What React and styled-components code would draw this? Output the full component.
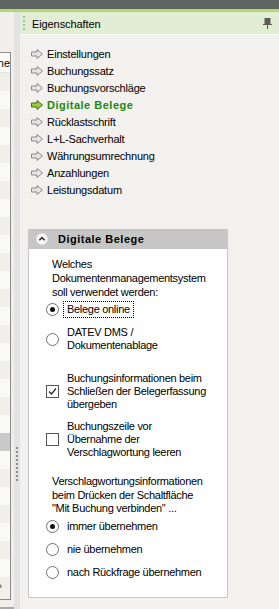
import React from "react";
import styled, { createGlobalStyle } from "styled-components";

const GlobalStyle = createGlobalStyle`
  html, body {
    margin: 0;
    padding: 0;
    background: #f2f1ed;
  }
  body {
    font-family: "Liberation Sans", Arial, sans-serif;
    font-size: 11px;
    color: #000;
  }
`;

const Frame = styled.div`
  width: 279px;
  height: 609px;
  display: flex;
  flex-direction: column;
  overflow: hidden;
  background: #f2f1ed;
`;

const TopBar = styled.div`
  height: 9px;
  background: #5e6562;
`;

const AccentLine = styled.div`
  height: 3px;
  background: #b4d96c;
`;

const Main = styled.div`
  flex: 1;
  display: flex;
  min-height: 0;
`;

/* left: clipped neighbour grid */
const LeftPane = styled.div`
  width: 14px;
  display: flex;
  flex-direction: column;
  padding-top: 40px;
  background: #f0efeb;
`;

const LeftTable = styled.div`
  width: 10px;
  height: 546px;
  border-top: 1px solid #8c8c8c;
  border-right: 1px solid #8c8c8c;
  border-bottom: 1px solid #8c8c8c;
  overflow: hidden;
  display: flex;
  flex-direction: column;
  position: relative;
`;

const TableHead = styled.div`
  height: 19px;
  flex: none;
  display: flex;
  align-items: center;
  justify-content: flex-end;
  background: #fbfbfa;
  border-bottom: 1px solid #e2e2de;
  white-space: nowrap;
  font-size: 11px;
`;

const TableRow = styled.div`
  height: 18px;
  flex: none;
  background: ${(p) => (p.$selected ? "#c9c9c9" : p.$odd ? "#f0efeb" : "#fafaf8")};
`;

const RowMarker = styled.span`
  position: absolute;
  left: -1px;
  bottom: 8px;
  color: #555;
  font-size: 9px;
  font-weight: bold;
  line-height: 9px;
`;

const BottomStrip = styled.div`
  margin-top: auto;
  height: 2px;
  background: #a9a9a9;
`;

const Splitter = styled.div`
  width: 6px;
  background: #e3e3e3;
  display: flex;
  flex-direction: column;
  align-items: center;
  padding-top: 435px;
  box-sizing: border-box;
`;

const GripDots = styled.div`
  width: 2px;
  height: 34px;
  margin-left: -1px;
  background: repeating-linear-gradient(
    to bottom,
    #8e8e8e 0,
    #8e8e8e 2px,
    transparent 2px,
    transparent 4px
  );
`;

/* right: property pane */
const PropertyPane = styled.div`
  flex: 1;
  display: flex;
  flex-direction: column;
  min-width: 0;
`;

const PaneHeader = styled.div`
  height: 22px;
  flex: none;
  display: flex;
  align-items: center;
  background: #e1eed3;
  border-bottom: 1px solid #f9f9f7;
  padding-left: 3px;
  padding-right: 7px;
`;

const HeaderGrip = styled.div`
  width: 2px;
  height: 14px;
  margin-right: 7px;
  background: repeating-linear-gradient(
    to bottom,
    #b3b8ae 0,
    #b3b8ae 2px,
    transparent 2px,
    transparent 4px
  );
`;

const PaneTitle = styled.span`
  flex: 1;
  padding-top: 2px;
  letter-spacing: -0.1px;
`;

const NavList = styled.ul`
  list-style: none;
  margin: 0;
  padding: 10px 0 0 11px;
`;

const NavItem = styled.li`
  height: 17px;
  display: flex;
  align-items: center;
  gap: 4px;
  white-space: nowrap;
  letter-spacing: ${(p) => (p.$active ? "0.5px" : "-0.2px")};
  font-weight: ${(p) => (p.$active ? "bold" : "normal")};
  color: ${(p) => (p.$active ? "#23870f" : "#000")};
`;

const GroupBox = styled.section`
  margin: 31px 0 0 8px;
  width: 200px;
  display: flex;
  flex-direction: column;
`;

const GroupHeader = styled.div`
  height: 20px;
  display: flex;
  align-items: center;
  gap: 10px;
  padding-left: 8px;
  background: #c6c6c6;
  font-weight: bold;
  letter-spacing: 0.5px;
`;

const GroupBody = styled.div`
  height: 349px;
  box-sizing: border-box;
  background: #fff;
  border: 1px solid #c8c8c8;
  border-top: none;
  padding: 8px 0 0 17px;
  display: flex;
  flex-direction: column;
  letter-spacing: -0.3px;
  white-space: nowrap;
`;

const Prompt = styled.div`
  margin: ${(p) => p.$top || 0}px 0 0 6px;
  line-height: ${(p) => p.$lh || 14}px;
`;

const Option = styled.label`
  display: flex;
  align-items: center;
  gap: 8px;
  margin-top: ${(p) => p.$top || 0}px;
  min-height: 17px;
  line-height: 13px;
`;

const OptionText = styled.span`
  padding: 1px 3px 1px 3px;
  margin: -2px 0 -2px -4px;
  border: 1px dotted ${(p) => (p.$focus ? "#000" : "transparent")};
`;

const Radio = styled.span`
  width: 13px;
  height: 13px;
  flex: none;
  box-sizing: border-box;
  border-radius: 50%;
  border: 1px solid #6f6f6f;
  background: #fff;
  display: flex;
  align-items: center;
  justify-content: center;
  &::after {
    content: "";
    width: 5px;
    height: 5px;
    border-radius: 50%;
    background: ${(p) => (p.$checked ? "#111" : "transparent")};
  }
`;

const Check = styled.span`
  width: 13px;
  height: 13px;
  flex: none;
  box-sizing: border-box;
  border: 1px solid #555;
  background: #fff;
  display: flex;
  align-items: center;
  justify-content: center;
`;

function NavArrow({ active }) {
  return (
    <svg width="12" height="10" viewBox="0 0 12 10">
      <path
        d="M0.5 3 H6 V0.5 L11.5 5 L6 9.5 V7 H0.5 Z"
        fill={active ? "#9acb3c" : "#e6e6e6"}
        stroke={active ? "#4d6a17" : "#8a8a8a"}
        strokeWidth="1"
        strokeLinejoin="miter"
      />
    </svg>
  );
}

function Pin() {
  return (
    <svg width="9" height="11" viewBox="0 0 9 11">
      <rect x="1.5" y="0" width="6" height="6" fill="#5b5b5b" />
      <rect x="0" y="6" width="9" height="1" fill="#5b5b5b" />
      <rect x="4" y="7" width="1" height="4" fill="#5b5b5b" />
    </svg>
  );
}

function CollapseIcon() {
  return (
    <svg width="12" height="12" viewBox="0 0 12 12">
      <circle cx="6" cy="6" r="5.5" fill="#fafafa" stroke="#e0e0e0" />
      <path d="M3.3 7.3 L6 4.6 L8.7 7.3" fill="none" stroke="#333" strokeWidth="1.6" />
    </svg>
  );
}

function Tick() {
  return (
    <svg width="9" height="9" viewBox="0 0 9 9">
      <path d="M1 4.5 L3.5 7 L8 1.5" fill="none" stroke="#222" strokeWidth="1.2" />
    </svg>
  );
}

const navItems = [
  "Einstellungen",
  "Buchungssatz",
  "Buchungsvorschläge",
  "Digitale Belege",
  "Rücklastschrift",
  "L+L-Sachverhalt",
  "Währungsumrechnung",
  "Anzahlungen",
  "Leistungsdatum",
];

const rows = Array.from({ length: 29 }, (_, i) => i);

export default function App() {
  return (
    <>
      <GlobalStyle />
      <Frame>
        <TopBar />
        <AccentLine />
        <Main>
          <LeftPane>
            <LeftTable>
              <TableHead>one</TableHead>
              {rows.map((i) => (
                <TableRow key={i} $odd={i % 2 === 0} $selected={i === 20} />
              ))}
              <RowMarker>›</RowMarker>
            </LeftTable>
            <BottomStrip />
          </LeftPane>
          <Splitter>
            <GripDots />
          </Splitter>
          <PropertyPane>
            <PaneHeader>
              <HeaderGrip />
              <PaneTitle>Eigenschaften</PaneTitle>
              <Pin />
            </PaneHeader>
            <NavList>
              {navItems.map((label) => (
                <NavItem key={label} $active={label === "Digitale Belege"}>
                  <NavArrow active={label === "Digitale Belege"} />
                  {label}
                </NavItem>
              ))}
            </NavList>
            <GroupBox>
              <GroupHeader>
                <CollapseIcon />
                Digitale Belege
              </GroupHeader>
              <GroupBody>
                <Prompt>
                  Welches
                  <br />
                  Dokumentenmanagementsystem
                  <br />
                  soll verwendet werden:
                </Prompt>
                <Option $top={2}>
                  <Radio $checked />
                  <OptionText $focus>Belege online</OptionText>
                </Option>
                <Option $top={8}>
                  <Radio />
                  <OptionText>
                    DATEV DMS /
                    <br />
                    Dokumentenablage
                  </OptionText>
                </Option>
                <Option $top={20}>
                  <Check>
                    <Tick />
                  </Check>
                  <OptionText>
                    Buchungsinformationen beim
                    <br />
                    Schließen der Belegerfassung
                    <br />
                    übergeben
                  </OptionText>
                </Option>
                <Option $top={9}>
                  <Check />
                  <OptionText>
                    Buchungszeile vor
                    <br />
                    Übernahme der
                    <br />
                    Verschlagwortung leeren
                  </OptionText>
                </Option>
                <Prompt $top={16} $lh={13.5}>
                  Verschlagwortungsinformationen
                  <br />
                  beim Drücken der Schaltfläche
                  <br />
                  "Mit Buchung verbinden" ...
                </Prompt>
                <Option $top={2}>
                  <Radio $checked />
                  <OptionText>immer übernehmen</OptionText>
                </Option>
                <Option $top={6}>
                  <Radio />
                  <OptionText>nie übernehmen</OptionText>
                </Option>
                <Option $top={6}>
                  <Radio />
                  <OptionText>nach Rückfrage übernehmen</OptionText>
                </Option>
              </GroupBody>
            </GroupBox>
          </PropertyPane>
        </Main>
      </Frame>
    </>
  );
}
